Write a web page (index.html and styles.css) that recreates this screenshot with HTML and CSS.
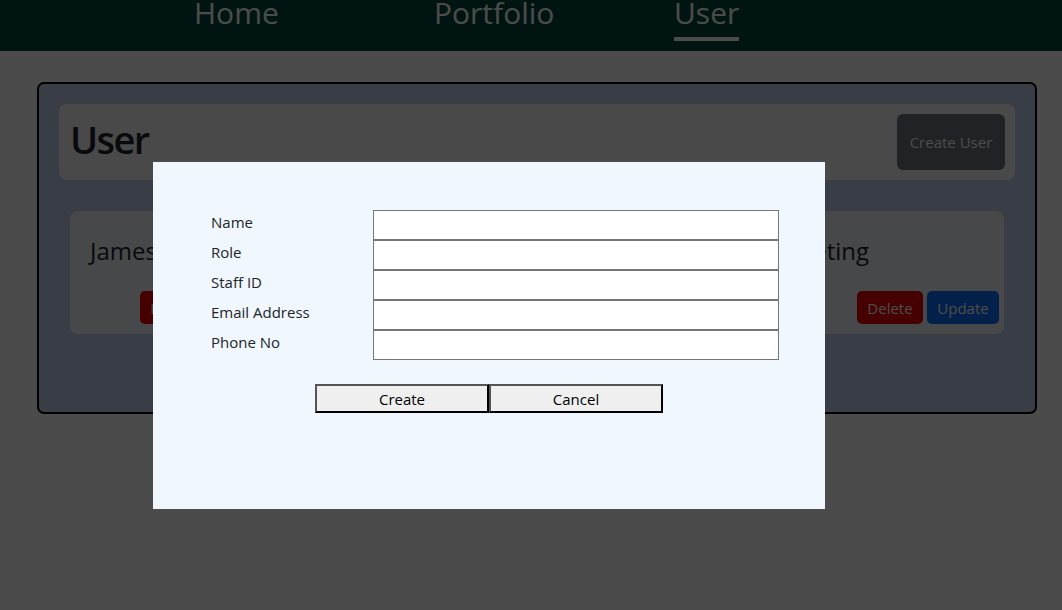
FILE: index.html
```html
<!DOCTYPE html>
<html lang="en">
<head>
<meta charset="utf-8">
<title>User</title>
<link rel="stylesheet" href="styles.css">
</head>
<body>
<nav class="navbar">
  <ul class="nav-links">
    <li class="nav-item"><a class="nav-link" href="#">Home</a></li>
    <li class="nav-item"><a class="nav-link" href="#">Portfolio</a></li>
    <li class="nav-item"><a class="nav-link active" href="#">User</a></li>
  </ul>
</nav>

<main class="page">
  <section class="panel">
    <header class="panel-head">
      <h1 class="panel-title">User</h1>
      <button class="btn btn-secondary btn-lg" type="button">Create User</button>
    </header>

    <div class="user-card">
      <div class="user-info">
        <span class="user-name">James Tan</span>
        <span class="user-dept">Marketing</span>
      </div>
      <div class="user-actions">
        <div class="btn-group">
          <button class="btn btn-danger btn-delete" type="button">Delete</button>
        </div>
        <div class="btn-group">
          <button class="btn btn-danger btn-delete" type="button">Delete</button>
          <button class="btn btn-primary btn-update" type="button">Update</button>
        </div>
      </div>
    </div>
  </section>
</main>

<div class="overlay">
  <div class="modal">
    <form class="modal-form">
      <div class="fields">
        <label class="field-label" for="f-name">Name</label>
        <input class="field-input" id="f-name" type="text">
        <label class="field-label" for="f-role">Role</label>
        <input class="field-input" id="f-role" type="text">
        <label class="field-label" for="f-staff">Staff ID</label>
        <input class="field-input" id="f-staff" type="text">
        <label class="field-label" for="f-email">Email Address</label>
        <input class="field-input" id="f-email" type="text">
        <label class="field-label" for="f-phone">Phone No</label>
        <input class="field-input" id="f-phone" type="text">
      </div>
      <div class="form-actions">
        <button class="form-btn" type="button">Create</button>
        <button class="form-btn" type="button">Cancel</button>
      </div>
    </form>
  </div>
</div>
</body>
</html>
```

FILE: styles.css
```css
* { box-sizing: border-box; }

html, body {
  margin: 0;
  padding: 0;
}

body {
  font-family: "Open Sans", "Noto Sans", sans-serif;
  background: #ffffff;
  color: #212529;
  width: 1062px;
  height: 610px;
  overflow: hidden;
}

/* ---------- navbar ---------- */
.navbar {
  height: 51px;
  background: #00473a;
}

.nav-links {
  list-style: none;
  margin: 0;
  padding: 0 0 0 194px;
  display: flex;
}

.nav-item {
  width: 240px;
}

.nav-link {
  display: inline-block;
  font-size: 30px;
  line-height: 26px;
  color: #ffffff;
  text-decoration: none;
  padding-bottom: 11px;
  border-bottom: 4px solid transparent;
}

.nav-link.active {
  border-bottom-color: #ffffff;
}

/* ---------- page ---------- */
.page {
  padding: 31px 0 0 37px;
}

.panel {
  width: 1000px;
  height: 332px;
  border: 2px solid #000;
  border-radius: 7px;
  background: #c1d3ee;
  padding: 20px;
}

.panel-head {
  display: flex;
  justify-content: space-between;
  align-items: flex-start;
  background: #f8f9fa;
  border-radius: 8px;
  padding: 10px 10px 10px 11px;
  height: 76px;
}

.panel-title {
  margin: 1px 0 0;
  font-size: 38px;
  font-weight: 600;
  line-height: 48px;
  color: #212529;
  letter-spacing: -1.6px;
}

.btn {
  font-family: inherit;
  border: none;
  border-radius: 5px;
  color: #ffffff;
  font-size: 15px;
  cursor: pointer;
}

.btn-lg {
  height: 56px;
  width: 108px;
  border-radius: 6px;
  padding: 0;
}

.btn-secondary { background: #6c757d; }
.btn-danger { background: #f00000; }
.btn-primary { background: #0d6efd; }

/* ---------- user card ---------- */
.user-card {
  margin: 31px 11px 0;
  height: 123px;
  background: #f1f4f8;
  border-radius: 8px;
  padding: 25px 5px 10px 20px;
  display: flex;
  flex-direction: column;
  justify-content: space-between;
}

.user-info {
  display: flex;
  justify-content: space-between;
  padding-right: 130px;
  font-size: 24px;
  line-height: 29px;
  color: #212529;
}

.user-actions {
  display: flex;
  justify-content: space-between;
  padding-left: 50px;
}

.btn-group {
  display: flex;
  gap: 4px;
}

.btn-group .btn {
  height: 33px;
  padding: 0;
}

.btn-delete { width: 66px; }
.btn-update { width: 72px; }

/* ---------- modal ---------- */
.overlay {
  position: fixed;
  inset: 0;
  background: rgba(0, 0, 0, 0.705);
}

.modal {
  position: absolute;
  left: 153px;
  top: 162px;
  width: 672px;
  height: 347px;
  background: #f0f7ff;
  padding: 48px 0 0 58px;
}

.fields {
  display: grid;
  grid-template-columns: 162px 406px;
  grid-auto-rows: 30px;
}

.field-label {
  font-size: 15px;
  line-height: 20px;
  padding-top: 2px;
  color: #212529;
}

.field-input {
  height: 30px;
  width: 406px;
  margin: 0;
  border: 1px solid #767676;
  background: #ffffff;
  font-family: inherit;
  font-size: 15px;
}

.form-actions {
  display: flex;
  justify-content: center;
  margin: 24px 0 0 -58px;
}

.form-btn {
  width: 174px;
  height: 29px;
  margin: 0;
  padding: 0;
  background: #efefef;
  border-style: solid;
  border-width: 2px;
  border-color: #555 #000 #000 #555;
  font-family: inherit;
  font-size: 15px;
  color: #000;
}
```
